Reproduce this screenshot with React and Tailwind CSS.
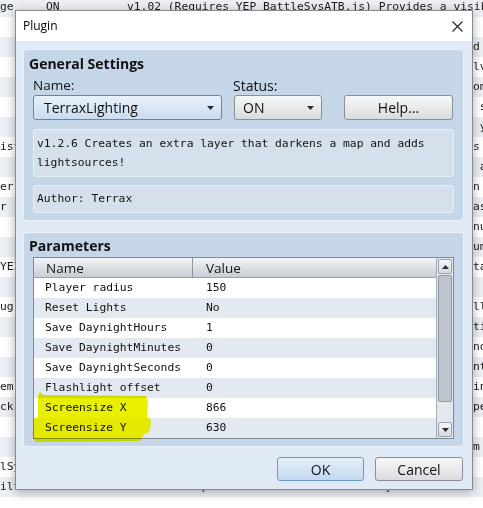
import React from "react";

const ui = "font-['Open_Sans','Noto_Sans',sans-serif]";
const mono = "font-['DejaVu_Sans_Mono',monospace] text-[11.3px]";

const bgRows = [
  { left: "ge", status: "ON", desc: "v1.02 (Requires YEP_BattleSysATB.js) Provides a visib" },
  { left: "", right: "" },
  { left: "", right: "d" },
  { left: "", right: "lv" },
  { left: "", right: "om" },
  { left: "", right: " s" },
  { left: "", right: " y" },
  { left: "ist", right: "s" },
  { left: "", right: " a" },
  { left: "er", right: "n" },
  { left: "r", right: "as" },
  { left: "", right: "nu" },
  { left: "", right: "um" },
  { left: "YEI", right: "ta" },
  { left: "", right: "" },
  { left: "ug", right: "ll" },
  { left: "", right: "ti" },
  { left: "", right: "no" },
  { left: "", right: "nt" },
  { left: "em:", right: "in" },
  { left: "ck:", right: "pe" },
  { left: "", right: "" },
  { left: "", right: "m" },
  { left: "lSy", right: "" },
  { left: "ilt", status: "ON", desc: "v1.14 Adds passive skills functionality to actors." },
  { left: "", right: "" }
];

const params = [
  ["Player radius", "150"],
  ["Reset Lights", "No"],
  ["Save DaynightHours", "1"],
  ["Save DaynightMinutes", "0"],
  ["Save DaynightSeconds", "0"],
  ["Flashlight offset", "0"],
  ["Screensize X", "866"],
  ["Screensize Y", "630"]
];

function Arrow({ up }) {
  return (
    <svg width="7" height="4" viewBox="0 0 7 4">
      <path d={up ? "M0 4 L3.5 0 L7 4 Z" : "M0 0 L7 0 L3.5 4 Z"} fill="#2b2b2b" />
    </svg>
  );
}

function BgRow({ row, index }) {
  const shade = index % 2 === 0 ? "bg-[#eceff3]" : "bg-white";
  if (row.desc) {
    return (
      <div className={`h-[20px] grid grid-cols-[46px_81px_1fr] items-center whitespace-nowrap overflow-hidden text-[#1a1a1a] ${shade}`}>
        <span>{row.left}</span>
        <span>{row.status}</span>
        <span>{row.desc}</span>
      </div>
    );
  }
  return (
    <div className={`h-[20px] flex items-center whitespace-pre text-[#1a1a1a] ${shade}`}>
      <span className="w-[473px] shrink-0">{row.left}</span>
      <span>{row.right}</span>
    </div>
  );
}

export default function App() {
  return (
    <div className={`relative w-[483px] h-[508px] overflow-hidden bg-white ${mono}`}>
      <div className="flex flex-col mt-[-3px]">
        {bgRows.map((row, i) => (
          <BgRow key={i} row={row} index={i} />
        ))}
      </div>

      {/* dialog */}
      <div className={`absolute left-[15px] top-[10px] w-[458px] border border-[#858a90] bg-[#dfeaf6] shadow-[0_2px_10px_rgba(0,0,0,0.3)] ${ui}`}>
        <div className="h-[30px] bg-white flex items-center justify-between pl-[7px] pr-[9px]">
          <span className="text-[12px] text-black">Plugin</span>
          <svg width="11" height="11" viewBox="0 0 11 11">
            <path d="M0.5 0.5 L10.5 10.5 M10.5 0.5 L0.5 10.5" stroke="#222" strokeWidth="1.1" />
          </svg>
        </div>

        <div className="pl-[7px] pr-[8px] pt-[8px] pb-[8px] flex flex-col">
          {/* General Settings */}
          <div className="h-[172px] rounded-[4px] border border-[#edf3fa] bg-[#c5d6e9] pt-[3px] flex flex-col">
            <div className="h-[20px] pl-[5px] flex items-center text-[14px] font-bold text-[#111]">
              General Settings
            </div>
            <div className="px-[9px] flex flex-col">
              <div className="flex mt-[4px]">
                <div className="w-[189px] flex flex-col">
                  <span className="h-[17px] flex items-center text-[13.5px] text-[#111]">Name:</span>
                  <div className="mt-[1px] h-[25px] rounded-[3px] border border-[#5b88c0] bg-gradient-to-b from-[#eaf2fb] to-[#c9dcf1] flex items-center justify-between pl-[10px] pr-[7px] text-[14px] text-[#111]">
                    <span>TerraxLighting</span>
                    <Arrow />
                  </div>
                </div>
                <div className="w-[88px] ml-[12px] flex flex-col">
                  <span className="h-[17px] -ml-[1px] flex items-center text-[14px] text-[#111]">Status:</span>
                  <div className="mt-[1px] h-[25px] rounded-[3px] border border-[#8a9097] bg-gradient-to-b from-[#f7f7f7] to-[#d9dcdf] flex items-center justify-between pl-[8px] pr-[7px] text-[14px] text-[#111]">
                    <span>ON</span>
                    <Arrow />
                  </div>
                </div>
                <div className="w-[109px] ml-[22px] flex flex-col">
                  <span className="h-[17px]"></span>
                  <div className="mt-[1px] h-[25px] rounded-[3px] border border-[#8a9097] bg-gradient-to-b from-[#f7f7f7] to-[#d9dcdf] flex items-center justify-center text-[14px] text-[#111]">
                    Help...
                  </div>
                </div>
              </div>
              <div className={`mt-[9px] h-[48px] rounded-[3px] border border-[#e9eff6] bg-[#d5e0ec] pl-[3px] pt-[4px] leading-[19px] text-[#111] ${mono}`}>
                v1.2.6 Creates an extra layer that darkens a map and adds
                <br />
                lightsources!
              </div>
              <div className={`mt-[8px] h-[28px] rounded-[3px] border border-[#e9eff6] bg-[#d5e0ec] pl-[3px] flex items-center text-[#111] ${mono}`}>
                Author: Terrax
              </div>
            </div>
          </div>

          {/* Parameters */}
          <div className="mt-[11px] h-[215px] rounded-[4px] border border-[#edf3fa] bg-[#c5d6e9] pt-[2px] flex flex-col">
            <div className="h-[20px] pl-[5px] flex items-center text-[14px] font-bold text-[#111]">
              Parameters
            </div>
            <div className="pl-[9px] mt-[2px]">
              <div className="w-[421px] h-[182px] border border-[#7f8994] bg-white flex">
                <div className="w-[402px] flex flex-col">
                  <div className="h-[20px] grid grid-cols-[159px_1fr] bg-gradient-to-b from-[#f4f5f7] to-[#c7cdd4] border-b border-[#9aa3ad] text-[13.5px] text-[#151515]">
                    <span className="pl-[12px] flex items-center border-r border-[#8e97a1]">Name</span>
                    <span className="pl-[13px] flex items-center">Value</span>
                  </div>
                  {params.map(([name, value], i) => (
                    <div
                      key={name}
                      className={`h-[20px] grid grid-cols-[160px_1fr] items-center text-[#111] ${mono} ${i % 2 === 1 ? "bg-[#e3e9f0]" : "bg-white"}`}
                    >
                      <span className="pl-[11px] whitespace-pre">{name}</span>
                      <span className="pl-[12px]">{value}</span>
                    </div>
                  ))}
                </div>
                <div className="w-[17px] border-l border-[#a3acb6] bg-[#e3e8ed] flex flex-col px-[1px] pt-[1px]">
                  <div className="h-[15px] rounded-[2px] border border-[#9aa3ad] bg-gradient-to-b from-[#f5f6f8] to-[#d6dbe0] flex items-center justify-center">
                    <Arrow up />
                  </div>
                  <div className="mt-[1px] h-[127px] rounded-[2px] border border-[#8f99a4] bg-[#bcc5ce]"></div>
                  <div className="flex-1"></div>
                  <div className="h-[15px] mb-[1px] rounded-[2px] border border-[#9aa3ad] bg-gradient-to-b from-[#f5f6f8] to-[#d6dbe0] flex items-center justify-center">
                    <Arrow />
                  </div>
                </div>
              </div>
            </div>
          </div>

          {/* buttons */}
          <div className="mt-[10px] flex justify-end gap-[11px] pr-[1px]">
            <div className="w-[87px] h-[24px] rounded-[3px] border border-[#6d98cb] bg-gradient-to-b from-[#e6f0fb] to-[#c2d8f1] flex items-center justify-center text-[14px] text-[#111]">
              OK
            </div>
            <div className="w-[88px] h-[24px] rounded-[3px] border border-[#8a9097] bg-gradient-to-b from-[#f7f7f7] to-[#d9dcdf] flex items-center justify-center text-[14px] text-[#111]">
              Cancel
            </div>
          </div>
        </div>
      </div>

      {/* marker highlight */}
      <svg className="absolute left-0 top-0 mix-blend-multiply pointer-events-none" width="483" height="508" viewBox="0 0 483 508">
        <path d="M38 396 L40 392 L43 395 L146 396 L148 401 L147 418 L38 418 Z" fill="#e8f000" />
        <path d="M34 418 L150 418 L151 424 L149 432 L144 434 L140 441 L35 442 L33 436 Z" fill="#ffff00" />
      </svg>
    </div>
  );
}
